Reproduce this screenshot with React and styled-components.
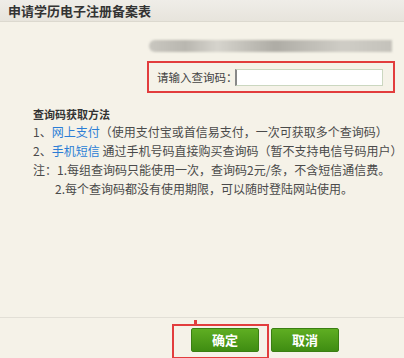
import React from 'react';
import styled, { createGlobalStyle } from "styled-components"

const Global = createGlobalStyle`
	body {
		margin: 0;
		background: #f5f2e8;
		font-family: "Noto Sans CJK SC", "Liberation Sans", sans-serif;
	}
`

export default function App () {
	return (
		<Page>
			<Global />
			<Header>
				<Title>申请学历电子注册备案表</Title>
			</Header>
			<Content>
				<BlurBar />
				<QueryBox>
					<Label>请输入查询码：</Label>
					<QueryInput type="text" />
				</QueryBox>
				<Guide>
					<GuideTitle>查询码获取方法</GuideTitle>
					<Line>1、<Link>网上支付</Link>（使用支付宝或首信易支付，一次可获取多个查询码）</Line>
					<Line>2、<Link>手机短信</Link> 通过手机号码直接购买查询码（暂不支持电信号码用户）</Line>
					<Line>注：1.每组查询码只能使用一次，查询码2元/条，不含短信通信费。</Line>
					<Line indent>2.每个查询码都没有使用期限，可以随时登陆网站使用。</Line>
				</Guide>
			</Content>
			<Footer>
				<Marked>
					<Button>确定</Button>
				</Marked>
				<Button>取消</Button>
			</Footer>
		</Page>
	);
}

const Page = styled.div`
	height: 358px;
	display: flex;
	flex-direction: column;
	overflow: hidden;
`

const Header = styled.div`
	height: 21px;
	border-bottom: 1px solid #dcd9cf;
	background: linear-gradient(#efede8, #e7e4dc);
	padding-left: 8px;
`

const Title = styled.div`
	font-size: 13px;
	font-weight: bold;
	line-height: 21px;
	color: #333;
`

const Content = styled.div`
	flex: 1;
	display: flex;
	flex-direction: column;
`

const BlurBar = styled.div`
	align-self: flex-end;
	margin: 18px 12px 0 0;
	width: 243px;
	height: 12px;
	border-radius: 6px 0 0 6px;
	background: linear-gradient(90deg, #c9c7c0 0%, #b9b7b0 15%, #d6d4cd 28%, #c2c0b9 40%, #aeaca5 52%, #bdbbb4 64%, #cfcdc6 80%, #c4c2bb 100%);
	filter: blur(1px);
`

const QueryBox = styled.div`
	margin: 9px 0 0 147px;
	width: 248px;
	height: 32px;
	box-sizing: border-box;
	border: 2px solid #e23d3d;
	display: flex;
	align-items: center;
	padding-left: 8px;
`

const Label = styled.span`
	font-size: 11.5px;
	color: #444;
	width: 78px;
	flex-shrink: 0;
	white-space: nowrap;
`

const QueryInput = styled.input`
	width: 148px;
	height: 17px;
	box-sizing: border-box;
	border: 1px solid #cbd7c0;
	border-left: 2px solid #888;
	background: #fff;
	outline: none;
	padding: 0;
`

const Guide = styled.div`
	margin-top: 14px;
	padding-left: 33px;
	color: #4a4a4a;
	white-space: nowrap;
`

const GuideTitle = styled.div`
	font-size: 11px;
	font-weight: bold;
	line-height: 15px;
	color: #333;
`

const Line = styled.div`
	font-size: 12px;
	line-height: 19px;
	padding-left: ${p => (p.indent ? "22px" : "0")};
`

const Link = styled.span`
	color: #2b7ed6;
`

const Footer = styled.div`
	height: 41px;
	box-sizing: border-box;
	border-top: 1px solid #e2dfd6;
	display: flex;
	align-items: flex-start;
	padding: 10px 0 0 191px;
	gap: 12px;
`

const Marked = styled.div`
	position: relative;

	&::after {
		content: "";
		position: absolute;
		left: -19px;
		right: -10px;
		top: -4px;
		bottom: -7px;
		border: 2px solid #e23d3d;
	}

	&::before {
		content: "";
		position: absolute;
		left: 3px;
		top: -8px;
		width: 3px;
		height: 4px;
		background: #e23d3d;
	}
`

const Button = styled.div`
	width: 68px;
	height: 24px;
	border-radius: 2px;
	background: linear-gradient(#5fae22, #3f8d12);
	border: 1px solid #3a7f12;
	box-sizing: border-box;
	color: #fff;
	font-size: 13px;
	font-weight: bold;
	line-height: 22px;
	text-align: center;
`
